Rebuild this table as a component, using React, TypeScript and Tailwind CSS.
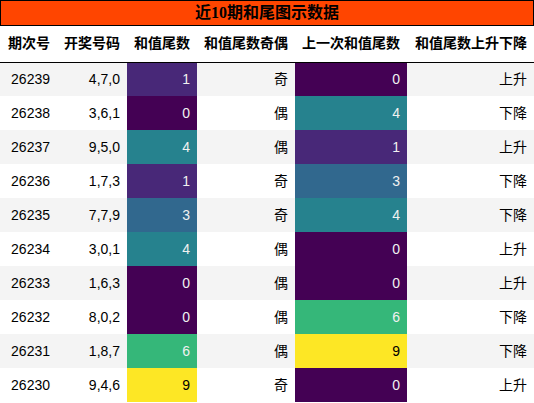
const rows = [
  ["26239", "4,7,0", 1, "奇", 0, "上升"],
  ["26238", "3,6,1", 0, "偶", 4, "下降"],
  ["26237", "9,5,0", 4, "偶", 1, "上升"],
  ["26236", "1,7,3", 1, "奇", 3, "下降"],
  ["26235", "7,7,9", 3, "奇", 4, "下降"],
  ["26234", "3,0,1", 4, "偶", 0, "上升"],
  ["26233", "1,6,3", 0, "偶", 0, "上升"],
  ["26232", "8,0,2", 0, "偶", 6, "下降"],
  ["26231", "1,8,7", 6, "偶", 9, "下降"],
  ["26230", "9,4,6", 9, "奇", 0, "上升"],
] as const;

// viridis-like gradient over 0..9
const cellColor: Record<number, string> = {
  0: "bg-[#440154] text-[#f1f1f1]",
  1: "bg-[#482878] text-[#f1f1f1]",
  3: "bg-[#31688e] text-[#f1f1f1]",
  4: "bg-[#26828e] text-[#f1f1f1]",
  6: "bg-[#35b779] text-[#f1f1f1]",
  9: "bg-[#fde725] text-black",
};

const headers = ["期次号", "开奖号码", "和值尾数", "和值尾数奇偶", "上一次和值尾数", "和值尾数上升下降"];
const widths = ["w-[57px]", "w-[70px]", "w-[70px]", "w-[98px]", "w-[112px]", "w-[127px]"];

export default function App() {
  return (
    <div className="w-[534px] h-[403px] overflow-hidden bg-white font-['Liberation_Sans','Noto_Sans_CJK_SC',sans-serif] text-black">
      <div className="h-[26px] bg-[#ff4500] border border-black flex items-center justify-center">
        <span className="text-[16px] font-bold font-['Liberation_Serif','Noto_Sans_CJK_SC',serif] leading-none">
          近10期和尾图示数据
        </span>
      </div>
      <table className="w-[534px] border-collapse table-fixed text-[14px]">
        <colgroup>
          {widths.map((w, i) => (
            <col key={i} className={w} />
          ))}
        </colgroup>
        <thead>
          <tr className="h-[36px] border-b border-black">
            {headers.map((h) => (
              <th key={h} className="px-[7px] text-right font-bold whitespace-nowrap">
                {h}
              </th>
            ))}
          </tr>
        </thead>
        <tbody>
          {rows.map((r, i) => (
            <tr key={r[0]} className={`h-[34px] ${i % 2 === 0 ? "bg-[#f4f4f4]" : "bg-white"}`}>
              <td className="px-[7px] text-right">{r[0]}</td>
              <td className="px-[7px] text-right">{r[1]}</td>
              <td className={`px-[7px] text-right ${cellColor[r[2]]}`}>{r[2]}</td>
              <td className="px-[7px] text-right">{r[3]}</td>
              <td className={`px-[7px] text-right ${cellColor[r[4]]}`}>{r[4]}</td>
              <td className="px-[7px] text-right">{r[5]}</td>
            </tr>
          ))}
        </tbody>
      </table>
    </div>
  );
}
